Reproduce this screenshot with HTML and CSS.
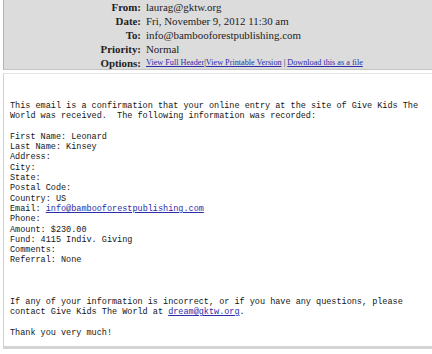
FILE: index.html
```html
<!DOCTYPE html>
<html lang="en">
<head>
    <meta charset="UTF-8">
    <title>Give Kids The World - Confirmation</title>
    <link rel="stylesheet" href="styles.css">
</head>
<body>
    <div class="header">
        <div class="label">From:</div>
        <div class="value">laurag@gktw.org</div>
        <div class="label">Date:</div>
        <div class="value">Fri, November 9, 2012 11:30 am</div>
        <div class="label">To:</div>
        <div class="value">info@bambooforestpublishing.com</div>
        <div class="label">Priority:</div>
        <div class="value">Normal</div>
        <div class="label">Options:</div>
        <div class="value options">
            <a href="#">View Full Header</a>|<a href="#">View Printable Version</a> | <a href="#">Download this as a file</a>
        </div>
    </div>

    <div class="message">
<pre>This email is a confirmation that your online entry at the site of Give Kids The
World was received.  The following information was recorded:

First Name: Leonard
Last Name: Kinsey
Address:
City:
State:
Postal Code:
Country: US
Email: <a href="#">info@bambooforestpublishing.com</a>
Phone:
Amount: $230.00
Fund: 4115 Indiv. Giving
Comments:
Referral: None



If any of your information is incorrect, or if you have any questions, please
contact Give Kids The World at <a href="#">dream@gktw.org</a>.

Thank you very much!
</pre>
    </div>
</body>
</html>
```

FILE: styles.css
```css
body {
    margin: 0;
    background-color: #fff;
    font-family: "Liberation Serif", "Times New Roman", serif;
}
.header {
    display: grid;
    grid-template-columns: 137px 1fr;
    column-gap: 5px;
    margin-left: 3px;
    padding: 0 0 1px 0;
    height: 68px;
    background-color: #dcdcdc;
    border-left: 1px solid #b4b4b4;
    border-bottom: 1px solid #c4c4c4;
    font-size: 10.9px;
    line-height: 14px;
    color: #222;
}
.label {
    text-align: right;
    font-weight: bold;
}
.value {
    white-space: nowrap;
}
.options {
    font-size: 8.2px;
}
.options a {
    color: #2d2dab;
}
.message {
    margin: 3px 0 0 3px;
    height: 245px;
    border-top: 1px solid #e4e4e4;
    border-left: 1px solid #d0d0d0;
    border-bottom: 3px solid #d4d4d4;
    padding: 27px 0 0 6px;
}
pre {
    margin: 0;
    font-family: "Liberation Mono", "Courier New", monospace;
    font-size: 8.5px;
    line-height: 10.3px;
    color: #151515;
}
pre a {
    color: #2d2dab;
}
```
